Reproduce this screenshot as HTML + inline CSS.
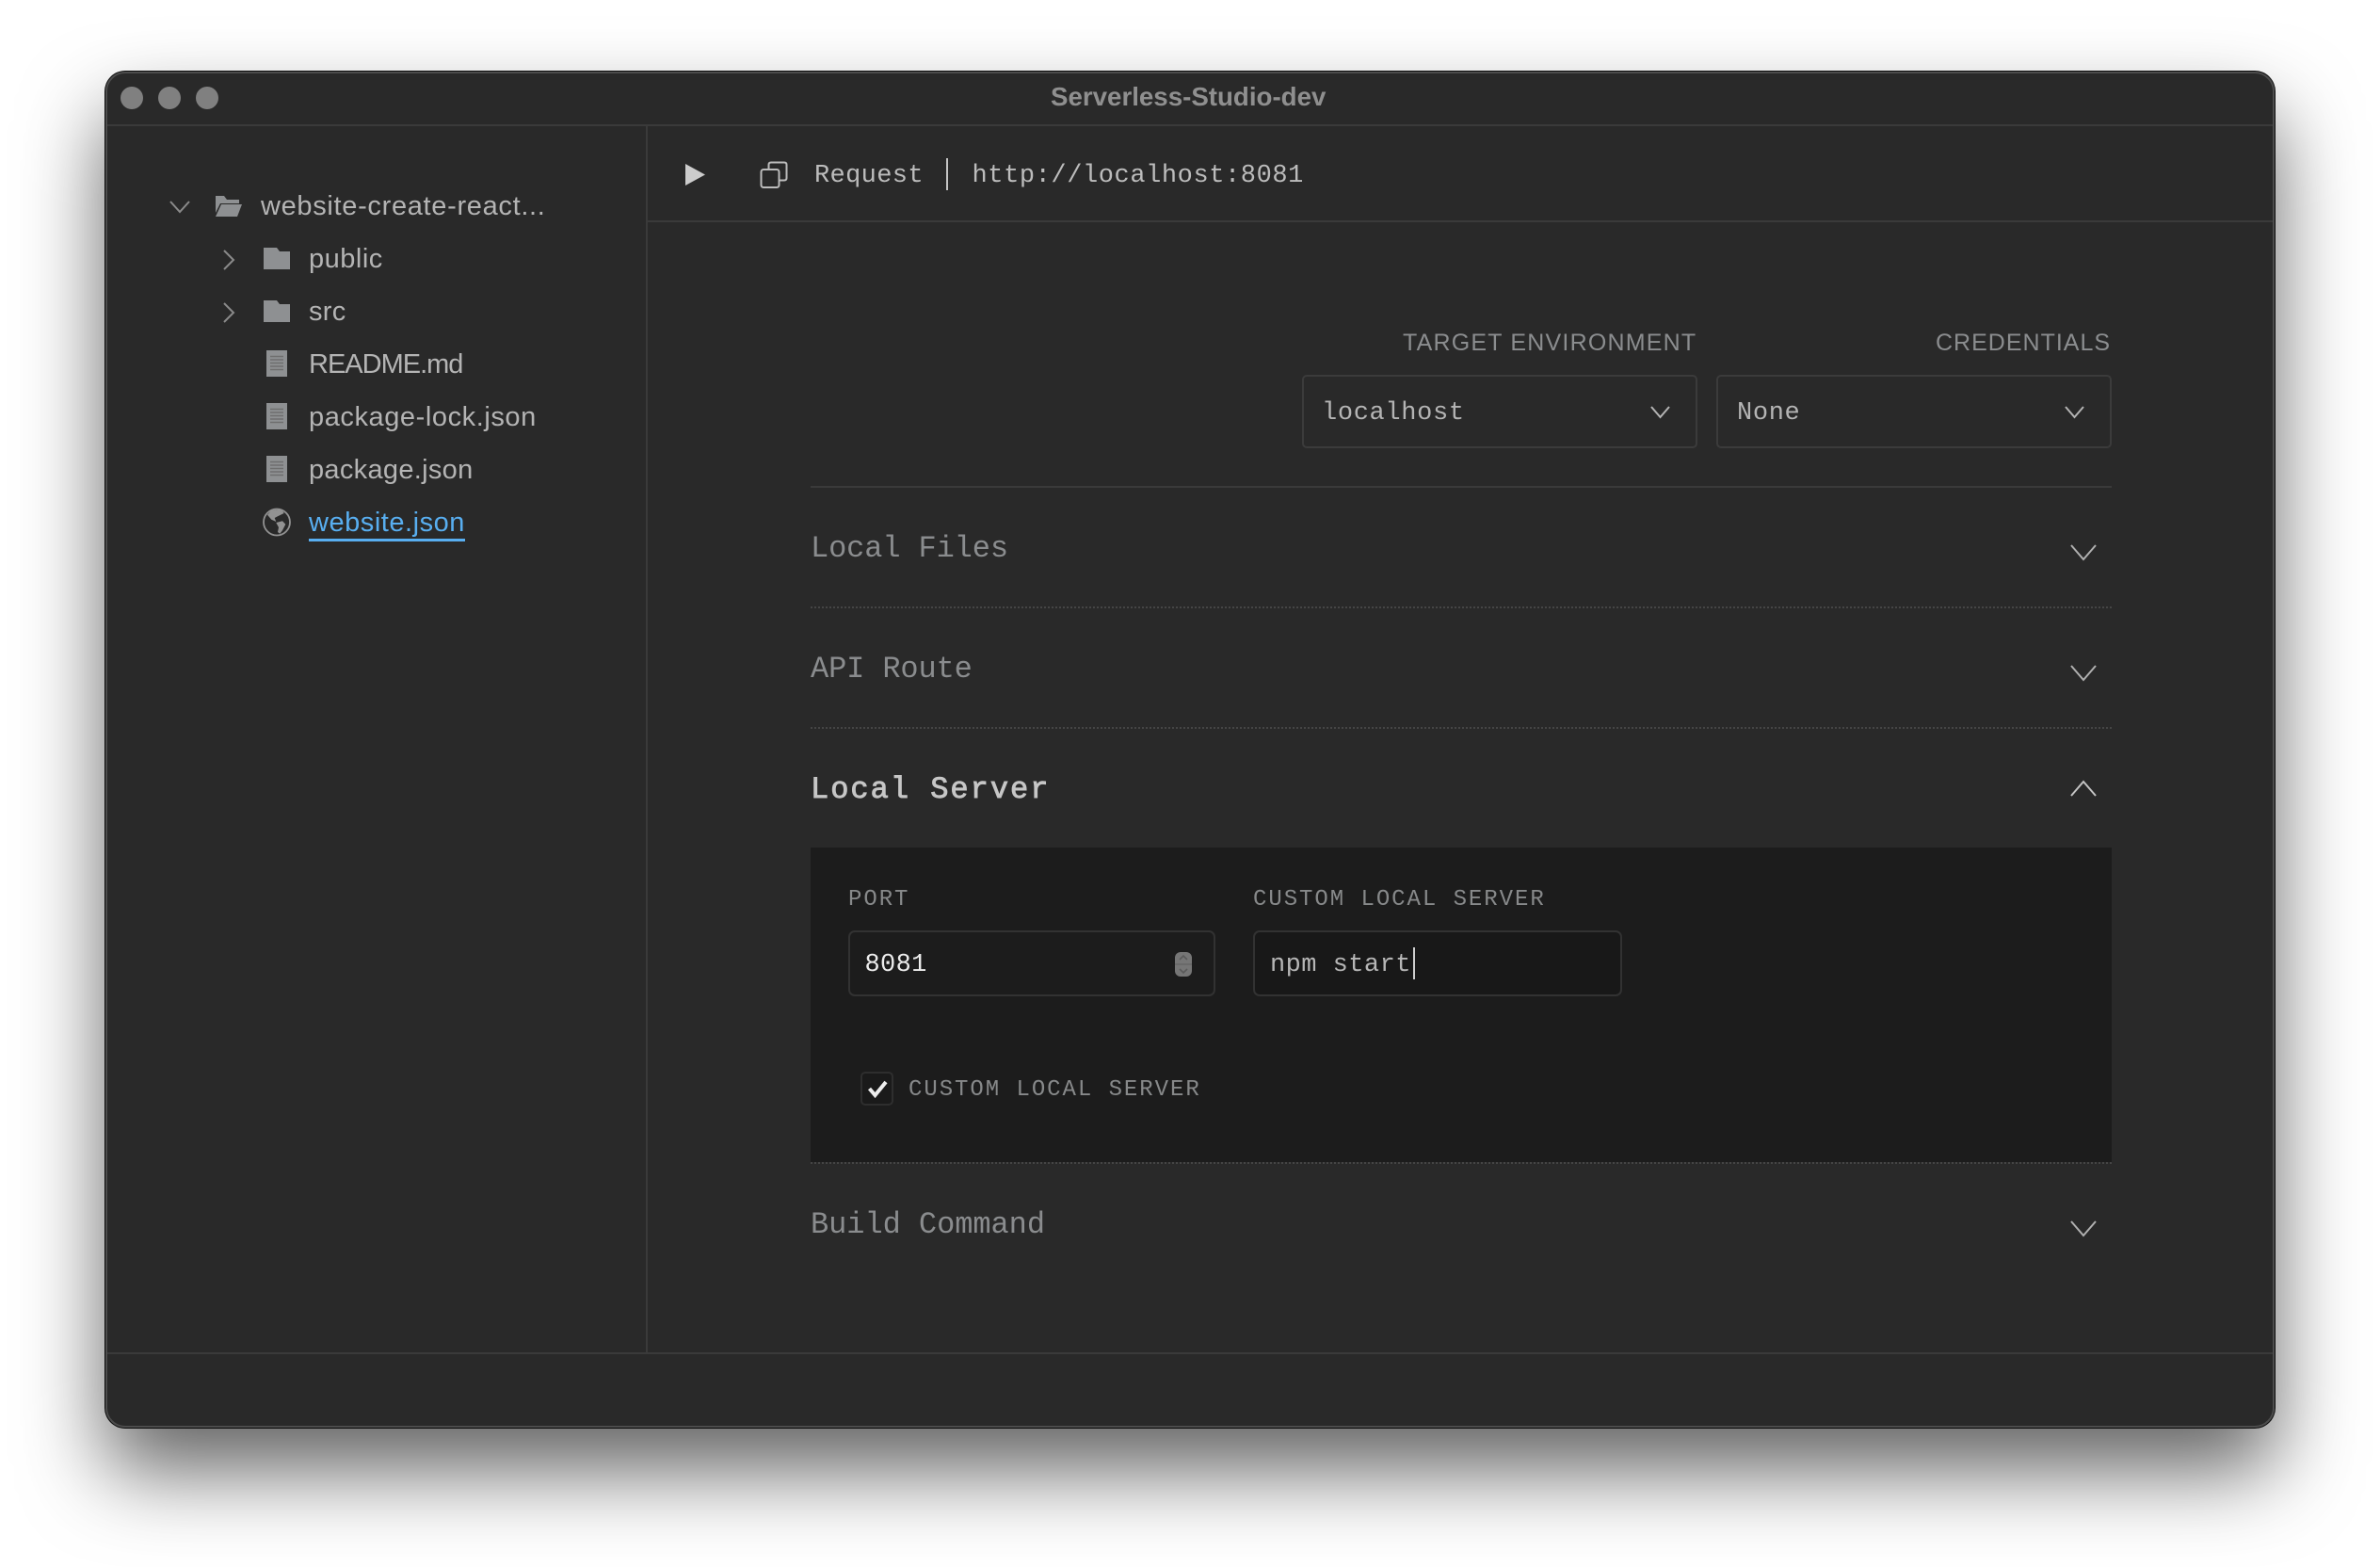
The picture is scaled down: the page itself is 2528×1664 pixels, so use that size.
<!DOCTYPE html>
<html>
<head>
<meta charset="utf-8">
<style>
html,body{margin:0;padding:0;width:2528px;height:1664px;background:#fff;overflow:hidden}
#win{position:absolute;left:112px;top:76px;width:2304px;height:1440px;box-sizing:border-box;background:#292929;border-radius:21px;box-shadow:0 46px 88px rgba(0,0,0,.61),0 0 0 1px #0c0c0c}
#win:after{content:"";position:absolute;inset:0;border-radius:21px;border:2px solid #4c4c4c;box-sizing:border-box}
.a{position:absolute;white-space:pre}
.s{font-family:"Liberation Sans",sans-serif}
.m{font-family:"Liberation Mono",monospace}
.tree{font-size:29px;line-height:40px;height:40px;color:#b4b4b4}
.line{position:absolute;background:#3a3a3a}
.dot{position:absolute;left:861px;width:1382px;height:0;border-top:2px dotted #454545}
.h{font-size:32px;line-height:40px;height:40px;left:861px;color:#8a8c8e;letter-spacing:-.12px}
.box{position:absolute;box-sizing:border-box;border:2px solid #3b3b3b;border-radius:5px}
.val{font-size:27px;line-height:36px;height:36px;letter-spacing:.65px}
.ml{font-size:24px;line-height:30px;height:30px;color:#87898a;letter-spacing:1.95px}
svg{position:absolute;left:0;top:0}
</style>
</head>
<body>
<div id="win"></div>

<div class="line" style="left:114px;top:132px;width:2300px;height:2px"></div>
<div class="line" style="left:686px;top:134px;width:2px;height:1303px"></div>
<div class="line" style="left:688px;top:234px;width:1726px;height:2px"></div>
<div class="line" style="left:114px;top:1436px;width:2300px;height:2px"></div>

<div class="a s" style="left:1116px;top:86px;font-size:27.7px;font-weight:700;line-height:34px;color:#8f8f8f;">Serverless-Studio-dev</div>

<div class="a s tree" style="left:277px;top:199px;letter-spacing:.68px">website-create-react...</div>
<div class="a s tree" style="left:328px;top:255px;letter-spacing:.5px">public</div>
<div class="a s tree" style="left:328px;top:311px;letter-spacing:.3px">src</div>
<div class="a s tree" style="left:328px;top:367px;letter-spacing:-1px">README.md</div>
<div class="a s tree" style="left:328px;top:423px;letter-spacing:.57px">package-lock.json</div>
<div class="a s tree" style="left:328px;top:479px;letter-spacing:.3px">package.json</div>
<div class="a s tree" style="left:328px;top:535px;color:#58aef0;letter-spacing:.53px">website.json</div>
<div class="a" style="left:328px;top:572px;width:166px;height:3px;background:#58aef0"></div>

<div class="a m" style="left:865px;top:169px;font-size:27px;line-height:36px;color:#bcbcbc;letter-spacing:.35px">Request</div>
<div class="a" style="left:1005px;top:168px;width:2px;height:34px;background:#c4c4c4"></div>
<div class="a m" style="left:1032.5px;top:169px;font-size:27px;line-height:36px;color:#bcbcbc;letter-spacing:.58px">http://localhost:8081</div>

<div class="a s" style="left:1490px;top:349px;font-size:25px;line-height:30px;color:#8b8d8f;letter-spacing:1.2px">TARGET ENVIRONMENT</div>
<div class="a s" style="left:2056px;top:349px;font-size:25px;line-height:30px;color:#8b8d8f;letter-spacing:1px">CREDENTIALS</div>

<div class="box" style="left:1383px;top:398px;width:420px;height:78px"></div>
<div class="box" style="left:1823px;top:398px;width:420px;height:78px"></div>
<div class="a m val" style="left:1404px;top:421px;color:#b4b4b4">localhost</div>
<div class="a m val" style="left:1845px;top:421px;color:#b4b4b4">None</div>

<div class="line" style="left:861px;top:516px;width:1382px;height:2px"></div>
<div class="a m h" style="top:563px">Local Files</div>
<div class="dot" style="top:644px"></div>
<div class="a m h" style="top:691px">API Route</div>
<div class="dot" style="top:772px"></div>
<div class="a m h" style="top:819px;color:#c6c6c6;-webkit-text-stroke:.9px #c6c6c6;letter-spacing:2px">Local Server</div>

<div class="a" style="left:861px;top:900px;width:1382px;height:334px;background:#1c1c1c"></div>
<div class="dot" style="top:1234px"></div>
<div class="a m ml" style="left:901px;top:941px">PORT</div>
<div class="a m ml" style="left:1331px;top:941px">CUSTOM LOCAL SERVER</div>
<div class="box" style="left:901px;top:988px;width:390px;height:70px;border-color:#323232;border-radius:7px"></div>
<div class="box" style="left:1331px;top:988px;width:392px;height:70px;border-color:#323232;border-radius:7px;background:#181818"></div>
<div class="a m val" style="left:918.5px;top:1007px;color:#ececec;letter-spacing:.35px">8081</div>
<div class="a m val" style="left:1349px;top:1007px;color:#b6b6b6;letter-spacing:.45px">npm start</div>
<div class="a" style="left:1501px;top:1006px;width:2px;height:34px;background:#cfcfcf"></div>
<div class="box" style="left:914px;top:1138px;width:35px;height:36px;border-color:#2e2e2e;background:#1a1a1a"></div>
<div class="a m ml" style="left:965px;top:1143px">CUSTOM LOCAL SERVER</div>

<div class="a m h" style="top:1281px;letter-spacing:-.05px">Build Command</div>

<svg width="2528" height="1664" viewBox="0 0 2528 1664" fill="none">
  <!-- traffic lights -->
  <circle cx="140" cy="104" r="12" fill="#808080"/>
  <circle cx="180" cy="104" r="12" fill="#808080"/>
  <circle cx="220" cy="104" r="12" fill="#808080"/>

  <!-- tree chevrons -->
  <path d="M181 214 L191 225 L201 214" stroke="#8a8a8a" stroke-width="2"/>
  <path d="M238 266 L248 276 L238 286" stroke="#8a8a8a" stroke-width="2"/>
  <path d="M238 322 L248 332 L238 342" stroke="#8a8a8a" stroke-width="2"/>

  <!-- open folder -->
  <path d="M229 226 V208 H238 L241 212 H254 V216 H234 Z" fill="#8e9092"/>
  <path d="M235 217 H257 L252 230 H229 Z" fill="#8e9092"/>

  <!-- folders -->
  <path d="M280 263 H294 L297 267 H308 V286 H280 Z" fill="#8e9092"/>
  <path d="M280 319 H294 L297 323 H308 V342 H280 Z" fill="#8e9092"/>

  <!-- docs -->
  <g>
    <rect x="283" y="372" width="22" height="28" fill="#8e9092"/>
    <path d="M287 378.5H301M287 382H301M287 385.5H301M287 389H301M287 392.5H301" stroke="#6e6e6e" stroke-width="1.4"/>
    <rect x="283" y="428" width="22" height="28" fill="#8e9092"/>
    <path d="M287 434.5H301M287 438H301M287 441.5H301M287 445H301M287 448.5H301" stroke="#6e6e6e" stroke-width="1.4"/>
    <rect x="283" y="484" width="22" height="28" fill="#8e9092"/>
    <path d="M287 490.5H301M287 494H301M287 497.5H301M287 501H301M287 504.5H301" stroke="#6e6e6e" stroke-width="1.4"/>
  </g>

  <!-- globe -->
  <circle cx="294" cy="554.5" r="14" stroke="#929292" stroke-width="1.8"/>
  <path d="M284 546.7 L288.3 541.7 L299.3 541.3 L301.7 545 L295 548.3 L291.7 550 L293.3 554 L288.3 551.7 Z" fill="#929292"/>
  <path d="M293.3 555 L300 553.3 L303.3 556.7 L300 563.3 L297.3 566.7 L295 565 L296 560 Z" fill="#929292"/>

  <!-- play -->
  <path d="M728 174 L749 185.5 L728 197 Z" fill="#cccccc"/>

  <!-- copy -->
  <rect x="808.5" y="180" width="19" height="19" rx="2.5" stroke="#bcbcbc" stroke-width="2"/>
  <path d="M816.5 179 V175 Q816.5 172.5 819 172.5 H833 Q835.5 172.5 835.5 175 V189 Q835.5 191.5 833 191.5 H828" stroke="#bcbcbc" stroke-width="2"/>

  <!-- select chevrons -->
  <path d="M1754 432 L1763.5 443 L1773 432" stroke="#b4b4b4" stroke-width="2"/>
  <path d="M2194 432 L2203.5 443 L2213 432" stroke="#b4b4b4" stroke-width="2"/>

  <!-- section chevrons -->
  <path d="M2200 579 L2213 594 L2226 579" stroke="#b0b0b0" stroke-width="2"/>
  <path d="M2200 707 L2213 722 L2226 707" stroke="#b0b0b0" stroke-width="2"/>
  <path d="M2200 845 L2213 830 L2226 845" stroke="#c4c4c4" stroke-width="2"/>
  <path d="M2200 1297 L2213 1312 L2226 1297" stroke="#b0b0b0" stroke-width="2"/>

  <!-- spinner -->
  <rect x="1248" y="1011" width="18" height="26" rx="6" fill="#767676"/>
  <path d="M1248 1024 H1266" stroke="#5e5e5e" stroke-width="1"/>
  <path d="M1253 1019 L1257 1015 L1261 1019" stroke="#5a5a5a" stroke-width="1.6"/>
  <path d="M1253 1029 L1257 1033 L1261 1029" stroke="#5a5a5a" stroke-width="1.6"/>

  <!-- check -->
  <path d="M923.5 1156 L929.5 1163 L941 1149" stroke="#ededed" stroke-width="4"/>
</svg>
</body>
</html>
